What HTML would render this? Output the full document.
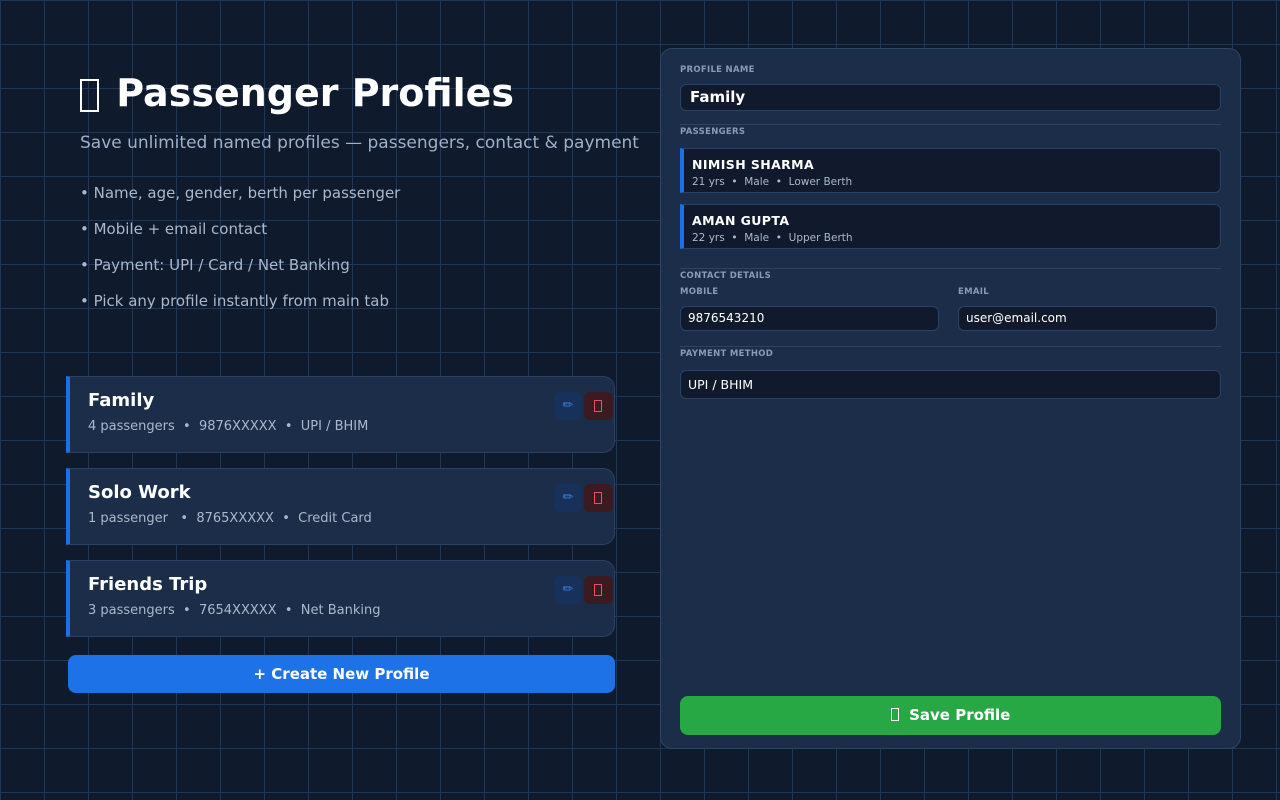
<!DOCTYPE html>
<html><head><meta charset="utf-8"><style>
*{margin:0;padding:0;box-sizing:border-box}
body{width:1280px;height:800px;overflow:hidden;font-family:"DejaVu Sans","Liberation Sans",sans-serif;background-color:#0f1a2d;
background-image:linear-gradient(to right,#203759 1px,transparent 1px),linear-gradient(to bottom,#203759 1px,transparent 1px);background-size:44px 44px;position:relative;color:#fff}
.a{position:absolute;white-space:nowrap}
.tofu{display:inline-block;border:1.5px solid currentColor}
h1{position:absolute;left:80px;top:70px;font-size:38px;font-weight:bold;line-height:46px;white-space:nowrap}
.sub{left:80px;top:133px;font-size:17px;color:#9fb0c8}
.bl{left:80px;font-size:15px;color:#a9b8cc}
.card{position:absolute;left:66px;width:549px;height:77px;background:#1b2d48;border:1px solid #2a4265;border-left:4px solid #1d6fe8;border-radius:0 12px 12px 0}
.card .n{position:absolute;left:18px;top:13px;font-size:18px;font-weight:bold}
.card .d{position:absolute;left:18px;top:42px;font-size:13px;color:#a9b8cc;white-space:pre}
.ed{position:absolute;left:484px;top:15px;width:28px;height:28px;background:#17315a;border-radius:6px;color:#3f7fe0;font-size:13px;text-align:center;line-height:28px}
.del{position:absolute;left:514px;top:15px;width:29px;height:28px;background:#3c1a22;border-radius:6px;color:#e05561}
.del .tofu{position:absolute;left:10px;top:8px;width:8px;height:12px;border-width:1px}
.btn{position:absolute;left:68px;top:655px;width:547px;height:38px;background:#1d72e8;border-radius:8px;text-align:center;line-height:38px;font-size:15px;font-weight:bold}
.panel{position:absolute;left:660px;top:48px;width:581px;height:701px;background:#1b2d48;border:1px solid #2a4565;border-radius:12px}
.lb{position:absolute;font-size:8.5px;font-weight:bold;color:#8a9bb3;letter-spacing:.3px}
.in{position:absolute;background:#101a2c;border:1px solid #2a4265;border-radius:6px}
.hr{position:absolute;left:19px;width:541px;height:1px;background:#2c4366}
.ps{position:absolute;left:19px;width:541px;height:45px;background:#101a2c;border:1px solid #2a4265;border-left:4px solid #1d6fe8;border-radius:0 6px 6px 0}
.ps .n{position:absolute;left:8px;top:8px;font-size:12.5px;font-weight:bold;letter-spacing:.4px}
.ps .d{position:absolute;left:8px;top:27px;font-size:10.5px;color:#a9b8cc;white-space:pre}
.save{position:absolute;left:19px;top:647px;width:541px;height:39px;background:#28a745;border-radius:8px;text-align:center;line-height:39px;font-size:15px;font-weight:bold}
</style></head><body>
<h1><span class="tofu" style="width:19px;height:33px;border-width:2px;vertical-align:-6px;margin-right:4px"></span> Passenger Profiles</h1>
<div class="a sub">Save unlimited named profiles — passengers, contact &amp; payment</div>
<div class="a bl" style="top:184px">• Name, age, gender, berth per passenger</div>
<div class="a bl" style="top:220px">• Mobile + email contact</div>
<div class="a bl" style="top:256px">• Payment: UPI / Card / Net Banking</div>
<div class="a bl" style="top:292px">• Pick any profile instantly from main tab</div>

<div class="card" style="top:376px"><div class="n">Family</div><div class="d">4 passengers  •  9876XXXXX  •  UPI / BHIM</div><div class="ed">✏</div><div class="del"><span class="tofu"></span></div></div>
<div class="card" style="top:468px"><div class="n">Solo Work</div><div class="d">1 passenger   •  8765XXXXX  •  Credit Card</div><div class="ed">✏</div><div class="del"><span class="tofu"></span></div></div>
<div class="card" style="top:560px"><div class="n">Friends Trip</div><div class="d">3 passengers  •  7654XXXXX  •  Net Banking</div><div class="ed">✏</div><div class="del"><span class="tofu"></span></div></div>
<div class="btn">+ Create New Profile</div>

<div class="panel">
<div class="lb" style="left:19px;top:16px">PROFILE NAME</div>
<div class="in" style="left:19px;top:35px;width:541px;height:27px"><span class="a" style="left:9px;top:3px;font-size:15px;font-weight:bold">Family</span></div>
<div class="hr" style="top:75px"></div>
<div class="lb" style="left:19px;top:78px">PASSENGERS</div>
<div class="ps" style="top:99px"><div class="n">NIMISH SHARMA</div><div class="d">21 yrs  •  Male  •  Lower Berth</div></div>
<div class="ps" style="top:155px"><div class="n">AMAN GUPTA</div><div class="d">22 yrs  •  Male  •  Upper Berth</div></div>
<div class="hr" style="top:219px"></div>
<div class="lb" style="left:19px;top:222px">CONTACT DETAILS</div>
<div class="lb" style="left:19px;top:238px">MOBILE</div>
<div class="lb" style="left:297px;top:238px">EMAIL</div>
<div class="in" style="left:19px;top:257px;width:259px;height:25px"><span class="a" style="left:7px;top:4px;font-size:12px">9876543210</span></div>
<div class="in" style="left:297px;top:257px;width:259px;height:25px"><span class="a" style="left:7px;top:4px;font-size:12px">user@email.com</span></div>
<div class="hr" style="top:297px"></div>
<div class="lb" style="left:19px;top:300px">PAYMENT METHOD</div>
<div class="in" style="left:19px;top:321px;width:541px;height:29px"><span class="a" style="left:7px;top:6px;font-size:12.5px">UPI / BHIM</span></div>
<div class="save"><span class="tofu" style="width:8px;height:13px;border-width:1px;vertical-align:-1px"></span>&nbsp; Save Profile</div>
</div>
</body></html>
